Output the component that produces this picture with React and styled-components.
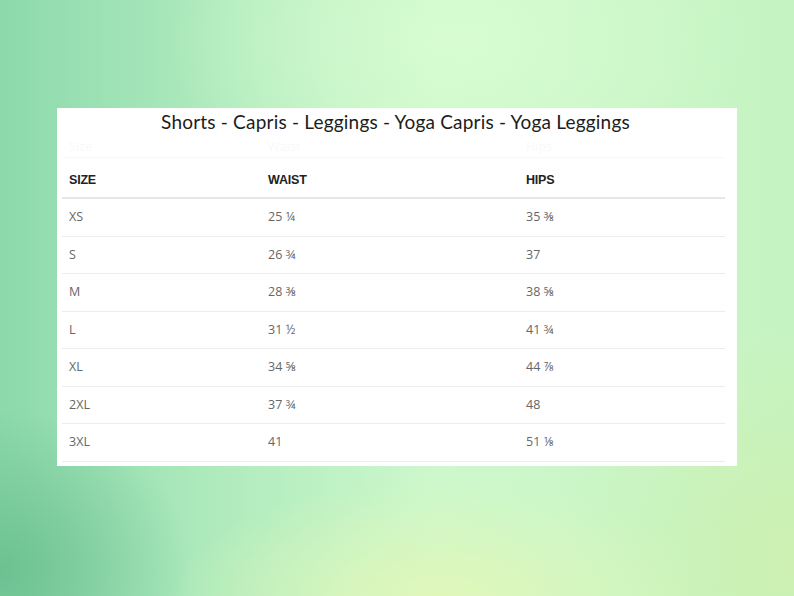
import styled, { createGlobalStyle } from "styled-components";

const GlobalStyle = createGlobalStyle`
  html, body {
    margin: 0;
    padding: 0;
  }
  body {
    width: 794px;
    height: 596px;
    overflow: hidden;
    font-family: "Open Sans", "Liberation Sans", sans-serif;
  }
`;

const Page = styled.div`
  width: 794px;
  height: 596px;
  box-sizing: border-box;
  padding-top: 108px;
  display: flex;
  justify-content: center;
  align-items: flex-start;
  background:
    radial-gradient(ellipse 420px 260px at 460px 40px, rgba(216, 252, 210, 0.9), rgba(216, 252, 210, 0) 70%),
    radial-gradient(ellipse 360px 160px at 440px 600px, rgba(226, 247, 184, 0.95), rgba(226, 247, 184, 0) 75%),
    radial-gradient(ellipse 240px 200px at 0px 570px, rgba(100, 186, 138, 0.8), rgba(100, 186, 138, 0) 80%),
    radial-gradient(ellipse 300px 300px at 794px 560px, rgba(206, 240, 176, 0.9), rgba(206, 240, 176, 0) 80%),
    linear-gradient(90deg, #8cd9ac 0%, #b0ebbd 28%, #cdf8cc 55%, #c5f4c2 100%);
`;

const Card = styled.section`
  width: 680px;
  height: 358px;
  box-sizing: border-box;
  background: #ffffff;
  padding: 0 12px 0 5px;
  display: flex;
  flex-direction: column;
`;

const Title = styled.h1`
  margin: 0;
  height: 28px;
  line-height: 28px;
  text-align: center;
  font-family: "Lato", "Noto Sans", sans-serif;
  font-weight: 400;
  font-size: 19px;
  letter-spacing: 0.2px;
  color: #1c1c1c;
  padding-left: 4px;
`;

const Table = styled.div`
  display: flex;
  flex-direction: column;
`;

const Row = styled.div`
  display: grid;
  grid-template-columns: 199px 258px 1fr;
  align-items: center;
  height: ${(p) => p.$h}px;
  padding-top: ${(p) => p.$pt || 0}px;
  border-bottom: ${(p) => p.$line}px solid ${(p) => p.$lineColor || "#ececec"};
  box-sizing: border-box;
`;

const Cell = styled.div`
  padding-left: 7px;
  font-family: ${(p) =>
    p.$head ? `"Liberation Sans", Arial, sans-serif` : `"Open Sans", "Liberation Sans", sans-serif`};
  font-size: 12.5px;
  font-weight: ${(p) => (p.$head ? 700 : 400)};
  color: ${(p) => (p.$faint ? "#f8f9f8" : p.$head ? "#222222" : "#666666")};
  letter-spacing: ${(p) => (p.$head ? "-0.2px" : "0.1px")};
  white-space: nowrap;
  margin-top: ${(p) => (p.$head ? 0 : -1)}px;
`;

const rows = [
  ["XS", "25 ¼", "35 ⅜"],
  ["S", "26 ¾", "37"],
  ["M", "28 ⅜", "38 ⅝"],
  ["L", "31 ½", "41 ¾"],
  ["XL", "34 ⅝", "44 ⅞"],
  ["2XL", "37 ¾", "48"],
  ["3XL", "41", "51 ⅛"],
];

export default function App() {
  return (
    <>
      <GlobalStyle />
      <Page>
        <Card>
          <Title>Shorts - Capris - Leggings - Yoga Capris - Yoga Leggings</Title>
          <Table>
            <Row $h={22} $line={1} $lineColor="#f7f9f7">
              <Cell $faint>Size</Cell>
              <Cell $faint>Waist</Cell>
              <Cell $faint>Hips</Cell>
            </Row>
            <Row $h={41} $pt={5} $line={2} $lineColor="#e6e6e6">
              <Cell $head>SIZE</Cell>
              <Cell $head>WAIST</Cell>
              <Cell $head>HIPS</Cell>
            </Row>
            {rows.map((r) => (
              <Row key={r[0]} $h={37.5} $line={1}>
                <Cell>{r[0]}</Cell>
                <Cell>{r[1]}</Cell>
                <Cell>{r[2]}</Cell>
              </Row>
            ))}
          </Table>
        </Card>
      </Page>
    </>
  );
}
